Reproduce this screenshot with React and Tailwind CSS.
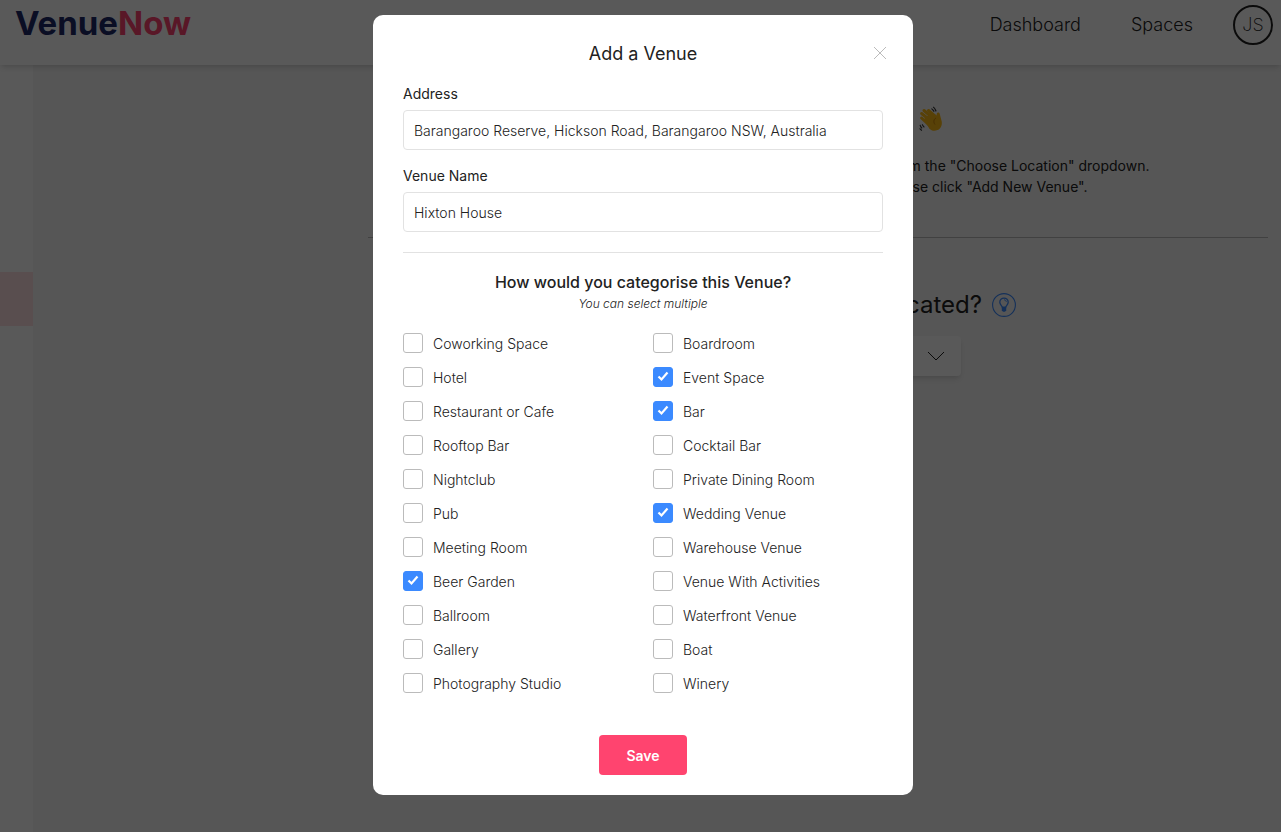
import { useState } from "react";

const categories = [
  ["Coworking Space", "Boardroom"],
  ["Hotel", "Event Space"],
  ["Restaurant or Cafe", "Bar"],
  ["Rooftop Bar", "Cocktail Bar"],
  ["Nightclub", "Private Dining Room"],
  ["Pub", "Wedding Venue"],
  ["Meeting Room", "Warehouse Venue"],
  ["Beer Garden", "Venue With Activities"],
  ["Ballroom", "Waterfront Venue"],
  ["Gallery", "Boat"],
  ["Photography Studio", "Winery"],
].flat();

function WaveIcon() {
  return (
    <svg viewBox="0 0 24 26" className="h-[26px] w-6" fill="none" aria-hidden="true">
      <g stroke="#fbb914" strokeWidth="3" strokeLinecap="round">
        <path d="M2.600 12 10 19" />
        <path d="M2.600 7.500 12 15" />
        <path d="M5 4.500 15 13" />
        <path d="M9.500 4.500 17 11" />
      </g>
      <path
        d="M5 13 12 7l5 5c.8-1 .4-2.500.8-4.600.4-1.500 2.600-1.200 2.900.4l2 7.600c.7 4-1.300 7.600-4.300 8.700-3 1.200-6 .6-8-1.400Z"
        fill="#fbb914"
      />
      <path d="M17 12c-2.400 1.500-2.800 4-1 6.500" stroke="#c77f0a" strokeWidth="0.900" />
      <path
        d="M12.300 2.800c1.600.2 1.600 1.800 3 2.600M14 1c2 .4 2 2.600 3.200 4.400M.8 19c1 .6.600 2.400 2.400 3.200M.6 22.500c1 .4 1 1.600 2.400 2M3 18.500c1 .6.800 2 2.400 2.800"
        stroke="#333"
        strokeWidth="1.100"
      />
    </svg>
  );
}

function BulbIcon() {
  return (
    <svg viewBox="0 0 24 24" className="size-6" fill="none" aria-hidden="true">
      <circle cx="12" cy="12" r="11.400" stroke="#3b8aff" strokeWidth="1.100" />
      <path
        d="M10.400 14.500c0-1.600-2.600-2.600-2.600-5.200a4.200 4.200 0 0 1 8.400 0c0 2.600-2.600 3.600-2.600 5.200Z"
        stroke="#3b8aff"
        strokeWidth="1.300"
      />
      <path d="M12 6.800c1.400 0 2.200.9 2.300 2.100" stroke="#3b8aff" strokeWidth="0.900" />
      <path d="M9.800 13.800h4.400v3.400l-1.200 1.600h-2l-1.200-1.600Z" fill="#3b8aff" />
    </svg>
  );
}

function Header() {
  return (
    <header className="relative flex h-[65px] items-start justify-between bg-white pt-[5px] pr-2 pl-[15px] shadow-md">
      <a href="#home" className="text-[33px] leading-9 font-bold text-[#1f2868]">
        Venue<span className="text-[#ff446f]">Now</span>
      </a>
      <nav className="flex items-center text-lg font-light text-[#222]">
        <a href="#dashboard">Dashboard</a>
        <a href="#spaces" className="ml-[50px]">
          Spaces
        </a>
        <button
          type="button"
          className="ml-10 size-10 rounded-full border-2 border-[#222] font-extralight"
        >
          JS
        </button>
      </nav>
    </header>
  );
}

function Page() {
  return (
    <div className="flex min-h-screen flex-col bg-[#f6f6f6]">
      <Header />
      <div className="flex flex-1">
        <aside className="w-[33px] shrink-0 bg-white pt-[207px]">
          <div className="h-[54px] bg-[#ffdfe3]"></div>
        </aside>
        <main className="flex flex-1 flex-col items-center pt-[39px] pr-[13px] pl-[335px] whitespace-nowrap text-[#222]">
          <h1 className="flex w-[250px] items-center justify-end gap-2 text-2xl leading-[30px]">
            Welcome, Jack
            <WaveIcon />
          </h1>
          <div className="mt-[21px] text-sm leading-[21px]">
            <p className="flex w-[663px] justify-end">
              To get started, please select the location of your venue from the "Choose Location" dropdown.
            </p>
            <p className="flex w-[601px] justify-end">
              If your venue is not listed in there, please click "Add New Venue".
            </p>
          </div>
          <hr className="mt-10 w-full border-[#bbb]" />
          <div className="mt-[49px] flex w-[396px] items-center justify-end gap-[10px]">
            <h2 className="text-2xl leading-9">Where are you located?</h2>
            <BulbIcon />
          </div>
          <button
            type="button"
            aria-label="Choose Location"
            className="mt-[13px] flex h-10 w-[285px] items-center justify-end rounded bg-white pr-4 shadow-md"
          >
            <svg viewBox="0 0 18 10" className="h-[10px] w-[18px]" fill="none" stroke="#222">
              <path d="M1 1l8 8 8-8" />
            </svg>
          </button>
        </main>
      </div>
    </div>
  );
}

function TextField({ id, label, defaultValue }) {
  return (
    <div className="flex flex-col gap-[6px]">
      <label htmlFor={id} className="text-sm leading-5">
        {label}
      </label>
      <input
        id={id}
        type="text"
        defaultValue={defaultValue}
        className="h-10 w-full rounded border border-[#e2e2e2] px-[10px] text-sm font-light outline-none"
      />
    </div>
  );
}

function Category({ name, checked, onChange }) {
  return (
    <label className="flex h-5 items-center gap-[10px] text-sm font-light">
      <span className="grid size-5 shrink-0">
        <input
          type="checkbox"
          checked={checked}
          onChange={onChange}
          className="col-start-1 row-start-1 size-5 appearance-none rounded-[3px] border border-[#bbb] bg-white checked:border-[#3b8aff] checked:bg-[#3b8aff]"
        />
        {checked && (
          <svg
            viewBox="0 0 20 20"
            className="pointer-events-none col-start-1 row-start-1 size-5"
            fill="none"
            stroke="#fff"
            strokeWidth="2.200"
          >
            <path d="M5.500 9.500l3 3 6-7" />
          </svg>
        )}
      </span>
      <span className="pt-[2px]">{name}</span>
    </label>
  );
}

function VenueModal() {
  const [selected, setSelected] = useState([
    "Event Space",
    "Bar",
    "Wedding Venue",
    "Beer Garden",
  ]);

  const toggle = (name) =>
    setSelected((prev) =>
      prev.includes(name) ? prev.filter((n) => n !== name) : [...prev, name]
    );

  return (
    <div className="fixed inset-0 flex items-start justify-center overflow-y-auto bg-black/65 pt-[15px] pl-[5px]">
      <form
        role="dialog"
        aria-labelledby="modal-title"
        onSubmit={(e) => e.preventDefault()}
        className="w-full max-w-[540px] rounded-[10px] bg-white px-[30px] pt-6 pb-5 text-[#222]"
      >
        <div className="grid grid-cols-[1fr_auto_1fr] items-center">
          <h2 id="modal-title" className="col-start-2 text-lg leading-[30px]">
            Add a Venue
          </h2>
          <button type="button" aria-label="Close" className="-mr-1 justify-self-end pb-[2px]">
            <svg viewBox="0 0 14 14" className="size-[14px]" fill="none" stroke="#bbb">
              <path d="M1 1l12 12M13 1L1 13" />
            </svg>
          </button>
        </div>

        <div className="mt-[15px] flex flex-col gap-4">
          <TextField
            id="address"
            label="Address"
            defaultValue="Barangaroo Reserve, Hickson Road, Barangaroo NSW, Australia"
          />
          <TextField id="venue-name" label="Venue Name" defaultValue="Hixton House" />
        </div>

        <hr className="mt-5 border-[#e2e2e2]" />

        <div className="mt-[17px] text-center">
          <h3 className="text-base leading-6 font-medium">
            How would you categorise this Venue?
          </h3>
          <p className="text-xs leading-5 font-light italic">You can select multiple</p>
        </div>

        <div className="mt-[19px] grid grid-cols-2 gap-x-5 gap-y-[14px]">
          {categories.map((name) => (
            <Category
              key={name}
              name={name}
              checked={selected.includes(name)}
              onChange={() => toggle(name)}
            />
          ))}
        </div>

        <div className="mt-[42px] flex justify-center">
          <button
            type="submit"
            className="h-10 w-[88px] rounded bg-[#ff446f] pt-[2px] text-sm font-semibold text-white"
          >
            Save
          </button>
        </div>
      </form>
    </div>
  );
}

function App() {
  return (
    <div className="font-[Inter,sans-serif]">
      <Page />
      <VenueModal />
    </div>
  );
}

export default App;
